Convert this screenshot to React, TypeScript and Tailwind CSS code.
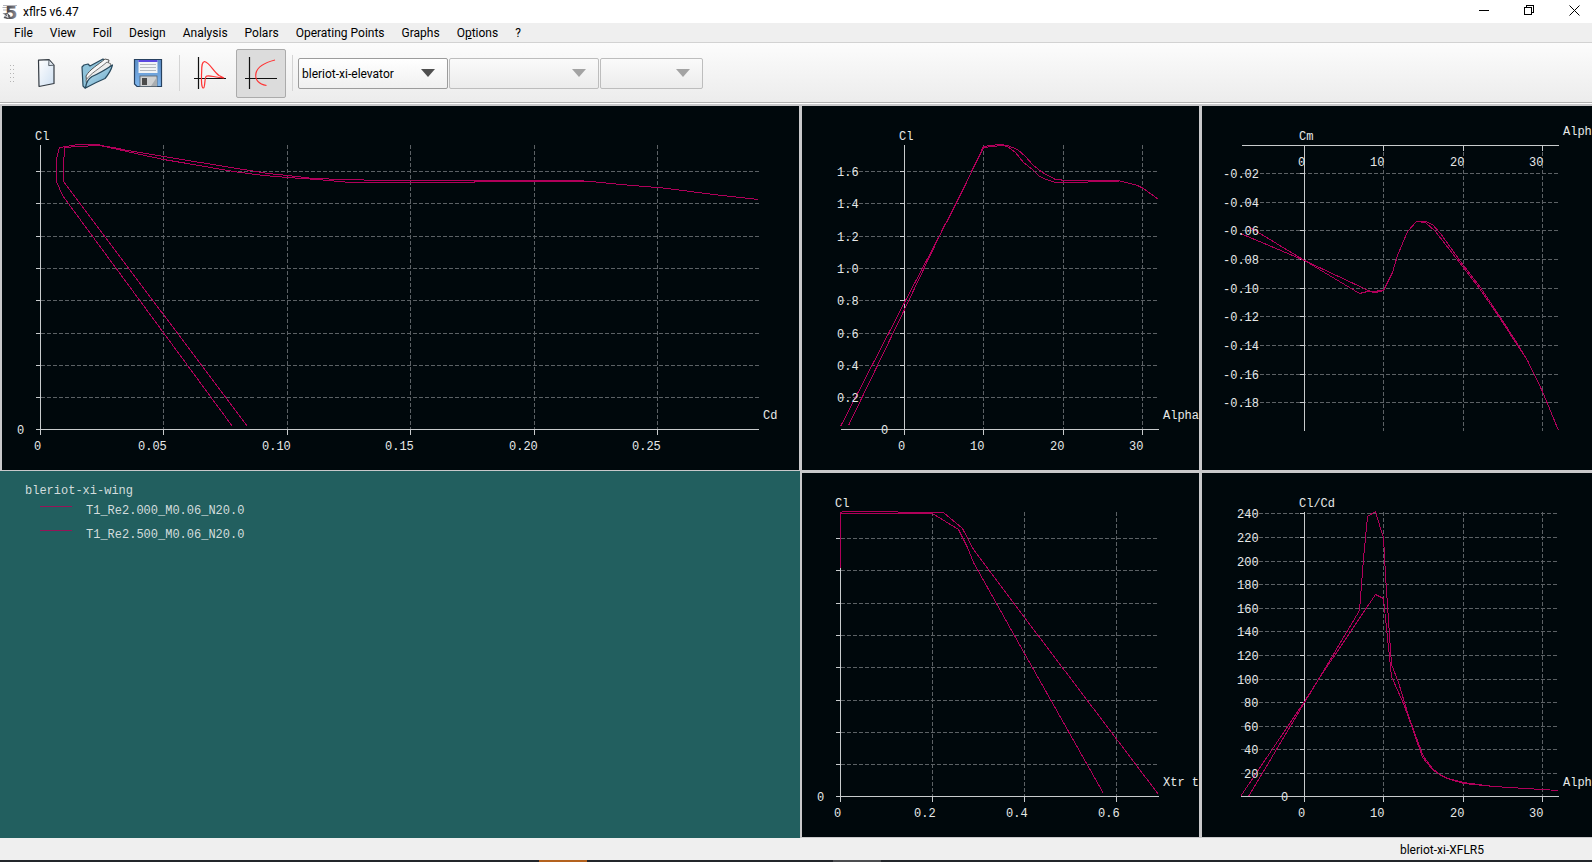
import { useState } from "react";

type Pt = [number, number];

interface Tick {
  at: number;
  label?: string;
  labelAt?: number;
}

interface ChartProps {
  name: string;
  width: number;
  yTitle: string;
  xTitle: string;
  xTitleX?: number;
  xTitleY?: number;
  originX: number;
  axisY: number;
  left: number;
  right: number;
  top?: number;
  bottom?: number;
  xTicks: Tick[];
  yTicks: Tick[];
  zero?: boolean;
  curves: Pt[][];
}

const MONO = "[font-family:'Liberation_Mono','Courier_New',monospace]";

function Chart(p: ChartProps) {
  const top = p.top ?? 38;
  const bottom = p.bottom ?? p.axisY;
  const xLabelY = p.axisY + 21;
  return (
    <svg
      role="img"
      aria-label={p.name}
      viewBox={`0 0 ${p.width} 364`}
      preserveAspectRatio="xMinYMin meet"
      className="block h-full w-full bg-[#00080c]"
    >
      <g transform="translate(0.5 0.5)" shapeRendering="crispEdges" fill="none" strokeWidth="1">
        <g stroke="#5c6165" strokeDasharray="4 2">
          {p.yTicks.map((t) => (
            <line key={t.at} x1={p.left} x2={p.right} y1={t.at} y2={t.at} />
          ))}
          {p.xTicks.map((t) => (
            <line key={t.at} x1={t.at} x2={t.at} y1={top} y2={bottom} />
          ))}
        </g>
        <g stroke="#c8cbcd">
          <line x1={p.left} x2={p.right} y1={p.axisY} y2={p.axisY} />
          <line x1={p.originX} x2={p.originX} y1={top} y2={bottom} />
          {p.yTicks.map((t) => (
            <line key={t.at} x1={p.originX - 5} x2={p.originX} y1={t.at} y2={t.at} />
          ))}
          {p.xTicks.map((t) => (
            <line key={t.at} x1={t.at} x2={t.at} y1={p.axisY} y2={p.axisY + 5} />
          ))}
          {p.zero !== false && (
            <>
              <line x1={p.originX - 5} x2={p.originX} y1={p.axisY} y2={p.axisY} />
              <line x1={p.originX} x2={p.originX} y1={p.axisY} y2={p.axisY + 5} />
            </>
          )}
        </g>
        <g stroke="#b0005a">
          {p.curves.map((c, i) => (
            <polyline key={i} points={c.map((q) => q.join(",")).join(" ")} />
          ))}
        </g>
      </g>
      <g fill="#e6e8e8" fontSize="12" className={MONO}>
        <text x={p.originX - 5} y={34}>{p.yTitle}</text>
        <text x={p.xTitleX ?? 361} y={p.xTitleY ?? 313}>{p.xTitle}</text>
        <text x={p.originX - 6} y={xLabelY}>0</text>
        {p.zero !== false && <text x={p.originX - 23} y={p.axisY + 5}>0</text>}
        {p.xTicks.map((t) => (
          <text key={t.at} x={t.labelAt} y={xLabelY}>{t.label}</text>
        ))}
        {p.yTicks.map((t) =>
          t.label ? (
            <text key={t.at} x={t.labelAt} y={t.at + 5}>{t.label}</text>
          ) : null
        )}
      </g>
    </svg>
  );
}

const clRows = [65, 97, 130, 162, 194, 227, 259, 291];
const clPlain: Tick[] = clRows.map((at) => ({ at }));
const clLabels = ["1.6", "1.4", "1.2", "1.0", "0.8", "0.6", "0.4", "0.2"];
const clLabelled: Tick[] = clRows.map((at, i) => ({ at, label: clLabels[i], labelAt: 35 }));

const alphaTicks: Tick[] = [
  { at: 181, label: "10", labelAt: 168 },
  { at: 261, label: "20", labelAt: 248 },
  { at: 340, label: "30", labelAt: 327 },
];

const dragPolar: ChartProps = {
  name: "Cl against Cd",
  width: 797,
  yTitle: "Cl",
  xTitle: "Cd",
  xTitleX: 761,
  originX: 38,
  axisY: 323,
  left: 38,
  right: 756,
  xTicks: [
    { at: 161, label: "0.05", labelAt: 136 },
    { at: 285, label: "0.10", labelAt: 260 },
    { at: 408, label: "0.15", labelAt: 383 },
    { at: 532, label: "0.20", labelAt: 507 },
    { at: 655, label: "0.25", labelAt: 630 },
  ],
  yTicks: clPlain,
  curves: [
    [[230, 320], [60, 89], [54, 75], [54, 52], [57, 41], [76, 38], [95, 38], [111, 42], [138, 48], [161, 53], [185, 57], [231, 65], [261, 69], [285, 71], [315, 73], [348, 76], [471, 76], [473, 75], [574, 75], [589, 75], [618, 78], [655, 81], [665, 82], [711, 88], [756, 93]],
    [[245, 320], [61, 75], [61, 60], [62, 41], [76, 40], [96, 39], [111, 41], [125, 44], [161, 50], [198, 56], [241, 63], [265, 67], [285, 69], [311, 72], [341, 73], [381, 74], [574, 74], [589, 75], [618, 78], [655, 81], [665, 82], [711, 88], [756, 93]],
  ],
};

const lift: ChartProps = {
  name: "Cl against Alpha",
  width: 397,
  yTitle: "Cl",
  xTitle: "Alpha",
  originX: 102,
  axisY: 323,
  left: 38,
  right: 356,
  xTicks: alphaTicks,
  yTicks: clLabelled,
  curves: [
    [[38, 320], [102, 196], [145, 114], [153, 98], [164, 76], [170, 63], [181, 40], [188, 39], [198, 38], [205, 39], [215, 43], [223, 50], [231, 59], [240, 66], [253, 73], [265, 74], [316, 74], [335, 79], [341, 82], [356, 93]],
    [[46, 319], [102, 203], [141, 121], [153, 98], [164, 76], [170, 63], [181, 41], [190, 40], [200, 39], [205, 40], [213, 46], [221, 56], [230, 63], [237, 70], [244, 73], [253, 76], [285, 76], [286, 75], [316, 75]],
  ],
};

const momentRows = [67, 96, 124, 153, 182, 210, 239, 268, 296];
const momentLabels = ["-0.02", "-0.04", "-0.06", "-0.08", "-0.10", "-0.12", "-0.14", "-0.16", "-0.18"];

const moment: ChartProps = {
  name: "Cm against Alpha",
  width: 390,
  yTitle: "Cm",
  xTitle: "Alpha",
  xTitleY: 29,
  originX: 102,
  axisY: 39,
  top: 39,
  bottom: 324,
  left: 39,
  right: 356,
  zero: false,
  xTicks: alphaTicks,
  yTicks: momentRows.map((at, i) => ({ at, label: momentLabels[i], labelAt: 21 })),
  curves: [
    [[38, 127], [102, 154], [168, 185], [181, 184], [190, 166], [195, 149], [205, 125], [214, 115], [223, 115], [230, 118], [238, 127], [258, 155], [278, 181], [298, 211], [316, 239], [325, 254], [340, 285], [356, 324]],
    [[46, 120], [102, 154], [157, 187], [165, 185], [173, 186], [181, 184], [190, 166], [195, 149], [205, 125], [214, 115], [223, 116], [233, 125], [257, 156], [277, 182], [297, 211], [315, 239], [325, 254]],
  ],
};

const transition: ChartProps = {
  name: "Cl against Xtr top",
  width: 397,
  yTitle: "Cl",
  xTitle: "Xtr top",
  originX: 38,
  axisY: 323,
  left: 38,
  right: 356,
  xTicks: [
    { at: 130, label: "0.2", labelAt: 112 },
    { at: 222, label: "0.4", labelAt: 204 },
    { at: 314, label: "0.6", labelAt: 296 },
  ],
  yTicks: clPlain,
  curves: [
    [[38, 94], [38, 40], [130, 40], [156, 56], [165, 74], [171, 89], [222, 180], [301, 320]],
    [[38, 94], [38, 39], [41, 38], [95, 38], [96, 39], [141, 39], [160, 55], [171, 76], [222, 144], [356, 321]],
  ],
};

const glideRows = [40, 64, 88, 111, 135, 158, 182, 206, 229, 253, 276, 300];

const glide: ChartProps = {
  name: "Cl/Cd against Alpha",
  width: 390,
  yTitle: "Cl/Cd",
  xTitle: "Alpha",
  originX: 102,
  axisY: 323,
  left: 38,
  right: 356,
  xTicks: alphaTicks,
  yTicks: glideRows.map((at, i) => {
    const value = 240 - 20 * i;
    return { at, label: String(value), labelAt: value >= 100 ? 35 : 42 };
  }),
  curves: [
    [[38, 323], [102, 228], [116, 206], [173, 121], [181, 125], [182, 135], [189, 203], [201, 230], [210, 255], [220, 284], [230, 296], [237, 301], [245, 305], [261, 310], [291, 313], [356, 317]],
    [[46, 323], [102, 229], [116, 206], [157, 137], [161, 85], [165, 43], [173, 38], [179, 58], [181, 64], [183, 102], [185, 132], [189, 191], [196, 209], [205, 239], [213, 262], [221, 283], [230, 295], [237, 301], [245, 305], [261, 309], [291, 313], [356, 317]],
  ],
};

function AppIcon() {
  return (
    <svg viewBox="0 0 18 18" className="size-[18px] overflow-visible" aria-hidden="true">
      <defs>
        <linearGradient id="five" x1="0" x2="1">
          <stop offset="0" stopColor="#333338" />
          <stop offset="1" stopColor="#94949c" />
        </linearGradient>
      </defs>
      <path d="M1 2.500h14M0.500 4.500h6M1 7h5" stroke="#b4b4ba" strokeWidth="1" />
      <text x="3" y="16" fontSize="18" fontWeight="700" fill="url(#five)" className="[font-family:'DejaVu_Sans',sans-serif]">5</text>
      <path d="M0.500 10.500l3 1.500l-2 3l4 1l3-3l-3-3z" fill="#55555a" />
      <path d="M2 12l3 2M5 11l1 4" stroke="#e8e8ea" strokeWidth="1" />
    </svg>
  );
}

function NewIcon() {
  return (
    <svg viewBox="0 0 32 32" className="size-8" aria-hidden="true">
      <defs>
        <linearGradient id="page" x1="0" y1="0" x2="1" y2="1">
          <stop offset="0" stopColor="#ffffff" />
          <stop offset="1" stopColor="#cfe0f2" />
        </linearGradient>
      </defs>
      <path d="M8.500 3.200L19 2.700L24 8.200V26.500L9 29.500Z" fill="url(#page)" stroke="#333a42" strokeWidth="1.200" strokeLinejoin="round" />
      <path d="M19 2.700L18.700 8.600L24 8.200Z" fill="#dfe6ee" stroke="#4b535c" strokeWidth="0.900" strokeLinejoin="round" />
    </svg>
  );
}

function OpenIcon() {
  return (
    <svg viewBox="0 0 32 34" className="h-[34px] w-8" aria-hidden="true">
      <defs>
        <linearGradient id="folder" x1="0" y1="0" x2="1" y2="1">
          <stop offset="0" stopColor="#c9e6f2" />
          <stop offset="1" stopColor="#5fa3c6" />
        </linearGradient>
      </defs>
      <path d="M1 11l2-2l4-1l2 2l13-7l2 2v8L4 32l-2-2Z" fill="#8fc3da" stroke="#27485c" strokeWidth="1.200" strokeLinejoin="round" />
      <path d="M5 20C9 13 17 9 24 3l4 1c-1 6-3 10-7 14L6 29Z" fill="#f7f7f7" stroke="#555" strokeWidth="1" strokeLinejoin="round" />
      <path d="M5 24C10 17 18 13 26 6l4 2c-2 5-4 8-8 12L6 31Z" fill="#ececec" stroke="#666" strokeWidth="0.900" strokeLinejoin="round" />
      <path d="M4.500 32C5 27 7 23 11 20.500C17 18 24 14 31.500 9C30 15 27 19 24 22.500C18 25 10 29 4.500 32Z" fill="url(#folder)" stroke="#27485c" strokeWidth="1.200" strokeLinejoin="round" />
    </svg>
  );
}

function SaveIcon() {
  return (
    <svg viewBox="0 0 30 30" className="size-[30px]" aria-hidden="true">
      <defs>
        <linearGradient id="disk" x1="0" y1="0" x2="0" y2="1">
          <stop offset="0" stopColor="#5d8fc9" />
          <stop offset="1" stopColor="#7fb6ee" />
        </linearGradient>
      </defs>
      <path d="M1.500 1.500H28.500V28.500H4L1.500 26Z" fill="url(#disk)" stroke="#27415f" strokeWidth="1.200" />
      <rect x="5.500" y="2" width="19" height="13" fill="#f2f4f6" />
      <rect x="5.500" y="2" width="19" height="2" fill="#5a48e0" />
      <path d="M7 6.500h16M7 9.500h16M7 12.500h16" stroke="#b5bac0" strokeWidth="1" />
      <rect x="7" y="18" width="17" height="10.500" fill="#cfd1d2" stroke="#54606c" strokeWidth="0.800" />
      <rect x="9" y="20" width="5" height="7" fill="#4b4b4b" />
      <path d="M18 28L24 19V28Z" fill="#a9adb0" />
    </svg>
  );
}

function OpPointIcon() {
  return (
    <svg viewBox="0 0 32 32" className="size-8" aria-hidden="true">
      <path d="M4.500 0V32M0 21.500H32" stroke="#111" strokeWidth="1.200" fill="none" />
      <path d="M30 21L25 18.500C19 14 16 6 10.500 4.500C7 5 8 12 7.500 18C7.300 25 7.500 31 9.500 31C11 31 10.500 22 12 19.500C13.500 17.500 19 20 30 21Z" stroke="#f33" strokeWidth="1.200" fill="none" />
    </svg>
  );
}

function PolarIcon() {
  return (
    <svg viewBox="0 0 32 32" className="size-8" aria-hidden="true">
      <path d="M4.500 0V32M0 21.500H32" stroke="#111" strokeWidth="1.200" fill="none" />
      <path d="M30 3C22 5 13 8 11 16C9.500 23 14 27 21.500 28.500" stroke="#f33" strokeWidth="1.200" fill="none" />
    </svg>
  );
}

function Combo({ label, value, disabled, className }: { label: string; value: string; disabled?: boolean; className: string }) {
  return (
    <div className={`relative h-[31px] ${className}`}>
      <select
        aria-label={label}
        disabled={disabled}
        defaultValue={value}
        className="h-full w-full appearance-none rounded-xs border border-[#9c9c9c] bg-linear-to-b from-white to-[#f0f0f0] pt-0.5 pr-7 pl-[3px] text-[12px] text-black disabled:border-[#bdbdbd] disabled:from-[#fafafa] disabled:to-[#ececec] disabled:opacity-100"
      >
        <option value={value}>{value}</option>
      </select>
      <svg viewBox="0 0 14 8" aria-hidden="true" className={`pointer-events-none absolute top-[11px] right-[13px] h-2 w-3.5 ${disabled ? "fill-[#a3a3a3]" : "fill-[#4f4f4f]"}`}>
        <path d="M0 0H14L7 8Z" />
      </svg>
    </div>
  );
}

const toolButton = "flex h-[49px] w-[50px] items-center justify-center rounded-xs border border-transparent";
const toolChecked = "flex h-[49px] w-[50px] items-center justify-center rounded-xs border border-[#ababab] bg-[#dcdcdc]";

const menus = ["File", "View", "Foil", "Design", "Analysis", "Polars", "Operating Points", "Graphs", "Options", "?"];
const polars = ["T1_Re2.000_M0.06_N20.0", "T1_Re2.500_M0.06_N20.0"];

export default function App() {
  const [view, setView] = useState<"opp" | "polar">("polar");
  return (
    <div className="flex h-screen flex-col overflow-hidden bg-[#efefef] text-[12px] leading-4 text-black [font-family:'Segoe_UI','Roboto','Noto_Sans',sans-serif]">
      <header className="flex h-[23px] shrink-0 items-center bg-white pr-3 pl-0.5">
        <AppIcon />
        <h1 className="ml-[3px] grow">xflr5 v6.47</h1>
        <div className="flex gap-[34px] pb-0.5">
          <button type="button" aria-label="Minimize">
            <svg viewBox="0 0 11 11" className="size-[11px]" shapeRendering="crispEdges"><path d="M0 5.500H10" stroke="#000" /></svg>
          </button>
          <button type="button" aria-label="Restore">
            <svg viewBox="0 0 11 11" className="size-[11px]" shapeRendering="crispEdges"><path d="M0.500 2.500H7.500V9.500H0.500ZM2.500 2.500V0.500H9.500V7.500H7.500" fill="none" stroke="#000" /></svg>
          </button>
          <button type="button" aria-label="Close">
            <svg viewBox="0 0 11 11" className="size-[11px]"><path d="M0.500 0.500L10.500 10.500M10.500 0.500L0.500 10.500" stroke="#000" /></svg>
          </button>
        </div>
      </header>

      <nav aria-label="Main menu" className="flex h-5 shrink-0 items-center gap-[17px] border-b border-[#d2d2d2] pl-3.5">
        {menus.map((m) => (
          <button key={m} type="button" className="whitespace-nowrap">
            {m === "Options" ? <>O<u>p</u>tions</> : m}
          </button>
        ))}
      </nav>

      <div role="toolbar" aria-label="Tools" className="flex h-[61px] shrink-0 items-center border-b border-white bg-linear-to-b from-[#fcfcfc] to-[#ececec] shadow-[inset_0_-1px_0_#b0b0b0]">
        <svg viewBox="0 0 5 17" aria-hidden="true" className="mr-1.5 ml-2.5 h-[17px] w-[5px] fill-[#b4b4b4]" shapeRendering="crispEdges">
          {[0, 4, 8, 12, 16].map((y) => (
            <g key={y}>
              <rect x="0" y={y} width="1" height="1" />
              <rect x="3" y={y} width="1" height="1" />
            </g>
          ))}
        </svg>
        <div className="flex gap-px">
          <button type="button" aria-label="New" className={toolButton}><NewIcon /></button>
          <button type="button" aria-label="Open" className={toolButton}><OpenIcon /></button>
          <button type="button" aria-label="Save" className={toolButton}><SaveIcon /></button>
        </div>
        <div className="mr-[5px] ml-1.5 h-9 w-px bg-[#d4d4d4]" />
        <div className="flex gap-px">
          <button type="button" aria-label="Operating point view" aria-pressed={view === "opp"} onClick={() => setView("opp")} className={view === "opp" ? toolChecked : toolButton}><OpPointIcon /></button>
          <button type="button" aria-label="Polar view" aria-pressed={view === "polar"} onClick={() => setView("polar")} className={view === "polar" ? toolChecked : toolButton}><PolarIcon /></button>
        </div>
        <div className="mr-[5px] ml-1.5 h-9 w-px bg-[#d4d4d4]" />
        <div className="flex gap-px">
          <Combo label="Foil" value="bleriot-xi-elevator" className="w-[150px]" />
          <Combo label="Polar" value="" disabled className="w-[150px]" />
          <Combo label="Operating point" value="" disabled className="w-[103px]" />
        </div>
      </div>

      <main className="grid min-h-0 grow grid-cols-[800fr_400fr_392fr] grid-rows-[1fr_1fr] bg-[#c9c9cb]">
        <div className="min-h-0 min-w-0 pt-0.5 pr-px pb-px pl-0.5"><Chart {...dragPolar} /></div>
        <div className="min-h-0 min-w-0 pt-0.5 pr-px pb-px pl-0.5"><Chart {...lift} /></div>
        <div className="min-h-0 min-w-0 pt-0.5 pb-px pl-0.5"><Chart {...moment} /></div>
        <section className={`min-h-0 min-w-0 bg-[#225f5f] pt-3 pl-[25px] text-[#d3dddd] ${MONO}`}>
          <h2>bleriot-xi-wing</h2>
          <ul>
            {polars.map((name) => (
              <li key={name} className="flex h-6 gap-3.5 pl-[15px] leading-6">
                <span className="mt-[7px] h-px w-8 bg-[#961458]" />
                {name}
              </li>
            ))}
          </ul>
        </section>
        <div className="min-h-0 min-w-0 pt-0.5 pr-px pb-px pl-0.5"><Chart {...transition} /></div>
        <div className="min-h-0 min-w-0 pt-0.5 pb-px pl-0.5"><Chart {...glide} /></div>
      </main>

      <footer className="flex h-[22px] shrink-0 items-center justify-end pt-0.5 pr-[108px]">bleriot-xi-XFLR5</footer>
      <div aria-hidden="true" className="grid h-0.5 shrink-0 grid-cols-[539fr_48fr_246fr_48fr_711fr] bg-[#23262b]">
        <span />
        <span className="bg-[#b4621e]" />
        <span />
        <span className="bg-[#4c4d50]" />
      </div>
    </div>
  );
}
